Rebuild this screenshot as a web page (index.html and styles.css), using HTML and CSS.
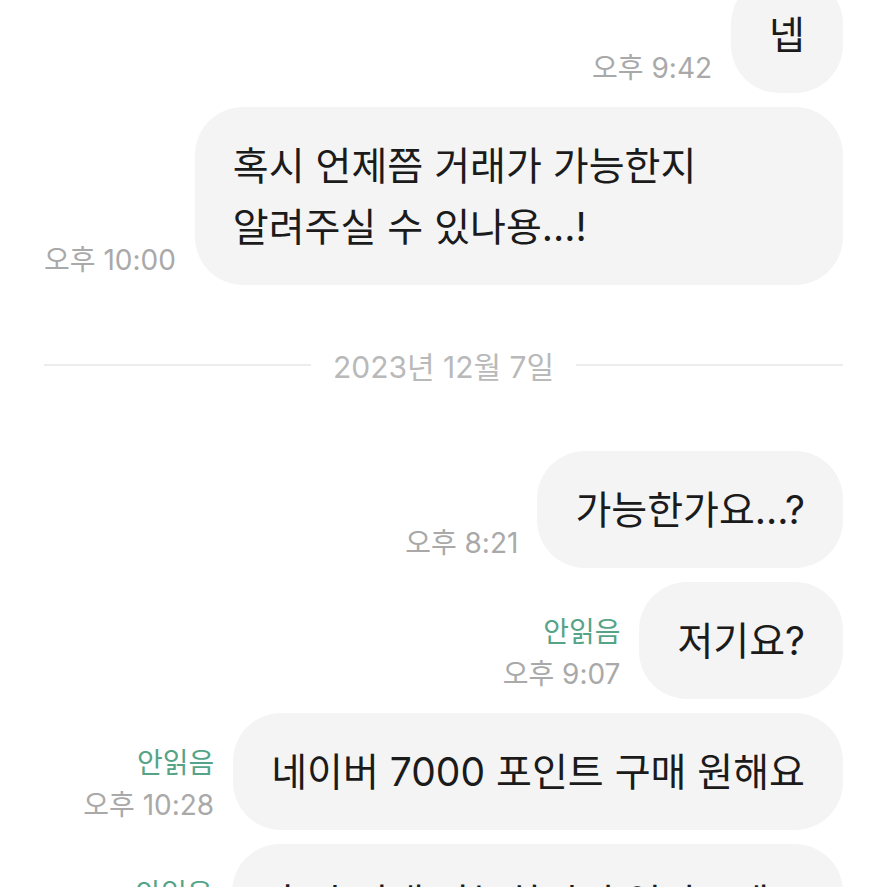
FILE: index.html
```html
<!DOCTYPE html>
<html lang="ko">
<head>
<meta charset="utf-8">
<link rel="stylesheet" href="styles.css">
</head>
<body>
<main class="chat">
  <div class="row">
    <div class="meta"><span class="time">오후 9:42</span></div>
    <div class="bubble">넵</div>
  </div>
  <div class="row">
    <div class="meta"><span class="time">오후 10:00</span></div>
    <div class="bubble">혹시 언제쯤 거래가 가능한지 알려주실 수 있나용...!</div>
  </div>
  <div class="divider"><span>2023년 12월 7일</span></div>
  <div class="row">
    <div class="meta"><span class="time">오후 8:21</span></div>
    <div class="bubble">가능한가요...?</div>
  </div>
  <div class="row">
    <div class="meta"><span class="unread">안읽음</span><span class="time">오후 9:07</span></div>
    <div class="bubble">저기요?</div>
  </div>
  <div class="row">
    <div class="meta"><span class="unread">안읽음</span><span class="time">오후 10:28</span></div>
    <div class="bubble">네이버 7000 포인트 구매 원해요</div>
  </div>
  <div class="row">
    <div class="meta"><span class="unread">안읽음</span><span class="time">오후 10:29</span></div>
    <div class="bubble">혹시 거래 가능하시면 연락주세요</div>
  </div>
</main>
</body>
</html>
```
FILE: styles.css
```css
html, body {
  margin: 0;
  padding: 0;
  background: #ffffff;
  height: 100%;
  overflow: hidden;
}
body {
  font-family: "Inter", "Noto Sans CJK KR", sans-serif;
  color: #1b1b1b;
}
.chat {
  display: flex;
  flex-direction: column;
  gap: 14px;
  padding: 0 44px;
  margin-top: -24px;
}
.row {
  display: flex;
  justify-content: flex-end;
  align-items: flex-end;
  gap: 19px;
}
.meta {
  display: flex;
  flex-direction: column;
  align-items: flex-end;
  padding-bottom: 4px;
  font-size: 28px;
  line-height: 42px;
  white-space: nowrap;
}
.time {
  color: #a9a9a9;
}
.unread {
  color: #55a487;
}
.bubble {
  background: #f4f4f4;
  border-radius: 48px;
  padding: 28px 38px;
  font-size: 39px;
  line-height: 61px;
  max-width: 650px;
  box-sizing: border-box;
  flex: 0 1 auto;
  word-break: keep-all;
}
.divider {
  display: flex;
  align-items: center;
  gap: 22px;
  height: 40px;
  margin: 46px 0 52px;
  color: #b9b9b9;
  font-size: 30px;
  white-space: nowrap;
}
.divider::before,
.divider::after {
  content: "";
  flex: 1;
  height: 2px;
  background: #ececec;
}
```
